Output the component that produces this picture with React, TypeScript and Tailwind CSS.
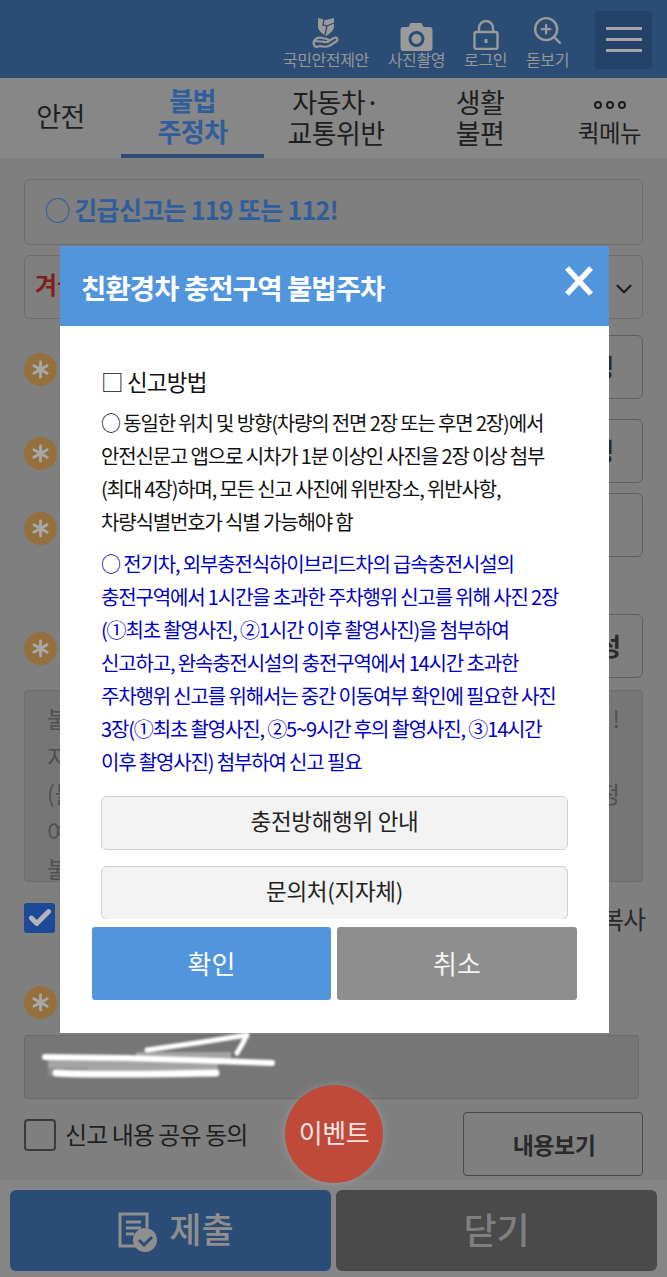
import { ZoomIn, Check, ChevronDown } from "lucide-react";

const Star = ({ className = "" }: { className?: string }) => (
  <div className={`flex h-[33px] w-[33px] shrink-0 items-center justify-center rounded-full bg-[#94703f] ${className}`}>
    <svg width="19" height="19" viewBox="0 0 20 20" stroke="#a8a8a8" strokeWidth="3" strokeLinecap="round">
      <path d="M10 2v16M3 6l14 8M17 6L3 14" />
    </svg>
  </div>
);

const HeaderItem = ({ label, icon }: { label: string; icon: React.ReactNode }) => (
  <div className="flex flex-col items-center">
    <div className="flex h-[32px] items-end justify-center">{icon}</div>
    <span className="whitespace-nowrap text-[16px] leading-[20px] tracking-[-0.4px] text-[#979797]">{label}</span>
  </div>
);

const SideButton = ({ label, shift = "" }: { label?: string; shift?: string }) => (
  <div className={`flex h-[64px] w-[150px] items-center justify-center rounded-[6px] border border-[#5f5f5f] text-[25px] font-bold text-[#2a2a2a] ${shift}`}>
    {label}
  </div>
);

const Row = ({ label, top, star, shift }: { label?: string; top: string; star: string; shift?: string }) => (
  <div className={`flex items-center justify-between ${top}`}>
    <Star className={star} />
    <SideButton label={label} shift={shift} />
  </div>
);

export default function App() {
  return (
    <div className="relative h-[1277px] w-[667px] overflow-hidden bg-[#7f7f7f] font-['Noto_Sans_CJK_KR',sans-serif] text-[#222]">
      {/* header */}
      <header className="flex h-[78px] items-start justify-end bg-[#2b4c75] pr-[15px]">
        <div className="mt-[17px] flex gap-[19px]">
          <HeaderItem
            label="국민안전제안"
            icon={
              <svg width="28" height="31" viewBox="0 0 28 31" fill="none" className="mb-[1px]">
                <path d="M6 1l8 2 8-2v8c0 4-3 7-8 10-5-3-8-6-8-10z" fill="#9a9a9a" />
                <path d="M12 2l-1 6 4 1-2 9M15 9l7-3" stroke="#2b4c75" strokeWidth="1.300" />
                <path d="M2 24c2-3 5-4 8-3l5 1c2 0 2 3 0 3h-4m4 0l7-4c3-1 4 1 3 3l-8 5c-3 1-6 1-9 0l-4 1c-2-1-3-4-2-6z" stroke="#9a9a9a" strokeWidth="2.200" strokeLinejoin="round" />
              </svg>
            }
          />
          <HeaderItem
            label="사진촬영"
            icon={
              <svg width="33" height="29" viewBox="0 0 32 29" className="mb-[-2px]">
                <path fillRule="evenodd" fill="#9a9a9a" d="M10 1h11l2 4h6c2 0 3 1 3 3v18c0 2-1 3-3 3H3c-2 0-3-1-3-3V8c0-2 1-3 3-3h5zM16 9a8 8 0 100 16 8 8 0 000-16zm0 3a5 5 0 110 10 5 5 0 010-10z" />
              </svg>
            }
          />
          <HeaderItem
            label="로그인"
            icon={
              <svg width="26" height="30" viewBox="0 0 26 30" fill="none" stroke="#9a9a9a" strokeWidth="2.400" className="mb-[-1px]">
                <rect x="1.500" y="12" width="23" height="17" rx="2" />
                <path d="M6 12V8a7 7 0 0114 0v4" />
                <path d="M13 19v4" strokeWidth="3" />
              </svg>
            }
          />
          <HeaderItem label="돋보기" icon={<ZoomIn size={33} strokeWidth={1.7} color="#9a9a9a" className="mb-[2px]" />} />
        </div>
        <div className="ml-[26px] mt-[11px] flex h-[58px] w-[57px] flex-col items-center justify-start gap-[8px] rounded-[3px] bg-[#244269] pt-[16px]">
          <span className="h-[3px] w-[36px] bg-[#a5a5a5]" />
          <span className="h-[3px] w-[36px] bg-[#a5a5a5]" />
          <span className="h-[3px] w-[36px] bg-[#a5a5a5]" />
        </div>
      </header>

      {/* tabs */}
      <nav className="flex h-[80px] bg-[#878787] text-center text-[27px] leading-[31px] tracking-[-0.6px] text-[#1e1e1e]">
        <div className="flex w-[121px] items-center justify-center pb-[5px]">안전</div>
        <div className="flex w-[143px] flex-col items-center justify-center border-b-[4px] border-[#2b4c75] pb-[3px] text-[26px] font-bold text-[#2f5e9c]">
          <span>불법</span>
          <span>주정차</span>
        </div>
        <div className="flex w-[144px] flex-col items-center justify-center pb-[3px]">
          <span>자동차·</span>
          <span>교통위반</span>
        </div>
        <div className="flex w-[144px] flex-col items-center justify-center pb-[3px]">
          <span>생활</span>
          <span>불편</span>
        </div>
        <div className="flex flex-1 flex-col items-center justify-end pb-[12px] text-[23.500px] leading-[28px]">
          <span className="mb-[9px] flex gap-[4px]">
            <i className="h-[8px] w-[8px] rounded-full border-[2px] border-[#1e1e1e]" />
            <i className="h-[8px] w-[8px] rounded-full border-[2px] border-[#1e1e1e]" />
            <i className="h-[8px] w-[8px] rounded-full border-[2px] border-[#1e1e1e]" />
          </span>
          <span>퀵메뉴</span>
        </div>
      </nav>

      {/* page form */}
      <main className="px-[24px] pt-[21px]">
        <div className="flex h-[66px] items-center rounded-[6px] border border-[#6d6d6d] pb-[4px] pl-[20px] text-[25px] font-bold tracking-[-0.7px] text-[#2f5e9c]">
          ◯ 긴급신고는 119 또는 112!
        </div>
        <div className="mt-[10px] flex h-[64px] items-center justify-between rounded-[6px] border border-[#6d6d6d] pl-[10px] pr-[5px] text-[24px] font-bold text-[#7f1f1f]">
          <span className="mb-[6px]">겨울철</span>
          <ChevronDown size={26} strokeWidth={2} color="#1e1e1e" className="mt-[4px]" />
        </div>
        <Row star="mt-[4px]" top="mt-[16px]" label="사진촬영" />
        <Row star="mt-[4px]" top="mt-[20px]" label="영상촬영" />
        <Row star="mt-[6px]" top="mt-[10px]" />
        <Row star="mt-[4px]" top="mt-[57px]" label="내용작성" shift="pl-[14px]" />
        <div className="mt-[12px] h-[192px] overflow-hidden rounded-[4px] border border-[#6d6d6d] bg-[#767676] px-[22px] pt-[9px] text-[23px] leading-[37.500px] text-[#505050]">
          <div className="flex justify-between"><span>불법</span><span>!</span></div>
          <div>지</div>
          <div className="flex justify-between"><span>(불</span><span>정</span></div>
          <div>여</div>
          <div>불</div>
        </div>
        <div className="mt-[21px] flex h-[30px] items-center justify-between">
          <div className="flex h-[30px] w-[31px] items-center justify-center rounded-[3px] bg-[#1c4a96]">
            <Check size={26} strokeWidth={4.5} color="#b5b5b5" />
          </div>
          <span className="mr-[-2px] text-[25px] leading-[30px] tracking-[-1px] text-[#2a2a2a]">복사</span>
        </div>
        <Star className="mt-[53px]" />
        <div className="mt-[16px] h-[64px] w-[615px] rounded-[3px] border border-[#6a6a6a] bg-[#767676]" />
        <div className="mt-[13px] flex h-[64px] items-start justify-between">
          <div className="mt-[7px] flex items-start gap-[9px]">
            <span className="h-[32px] w-[32px] rounded-[4px] border-[2px] border-[#3a3a3a]" />
            <span className="text-[24px] leading-[30px] tracking-[-0.95px] text-[#1e1e1e]">신고 내용 공유 동의</span>
          </div>
          <div className="flex h-[64px] w-[180px] items-center justify-center rounded-[4px] border border-[#4a4a4a] pl-[2px] text-[23px] font-bold tracking-[-0.5px] text-[#2a2a2a]">
            내용보기
          </div>
        </div>
      </main>

      {/* bottom buttons */}
      <footer className="absolute inset-x-0 bottom-0 flex h-[97px] gap-[5px] bg-[#858585] px-[10px] pb-[6px] pt-[10px]">
        <div className="flex w-[321px] items-center justify-center gap-[12px] rounded-[6px] bg-[#2a4c76] pb-[5px] pl-[10px] text-[35px] font-medium text-[#8f8f8f]">
          <svg width="40" height="40" viewBox="0 0 40 40" fill="none" className="mt-[8px]">
            <path d="M20 34H3V2h27v14" stroke="#8f8f8f" strokeWidth="3" />
            <path d="M9 10h15M9 16h15M9 22h8" stroke="#8f8f8f" strokeWidth="2.800" />
            <circle cx="28" cy="28" r="12" fill="#8f8f8f" />
            <path d="M22 28l5 5 8-8" stroke="#2a4c76" strokeWidth="3" />
          </svg>
          <span>제출</span>
        </div>
        <div className="flex w-[321px] items-center justify-center rounded-[6px] bg-[#4a4a4a] pb-[5px] text-[36px] font-medium text-[#7f7f7f]">닫기</div>
      </footer>

      {/* masked scribble lying over the input */}
      <svg className="absolute left-[40px] top-[1030px] blur-[1px]" width="240" height="55" viewBox="0 0 240 55" fill="none">
        <g fill="#a4a4a4">
          <rect x="8" y="29" width="170" height="11" />
          <rect x="96" y="22" width="95" height="8" />
          <rect x="8" y="38" width="40" height="8" fill="#8c8c8c" />
        </g>
        <g stroke="#ffffff" strokeLinecap="round" strokeLinejoin="round">
          <path d="M5 27l80 1 65 2 82 3" strokeWidth="6" />
          <path d="M107 20c30-4 70-10 100-15 -3 6-6 12-10 18" strokeWidth="5" />
          <path d="M16 43c30 2 100 1 160 0" strokeWidth="7" />
        </g>
      </svg>

      {/* event bubble */}
      <div className="absolute left-[285px] top-[1085px] flex h-[98px] w-[98px] items-center justify-center rounded-full bg-[#bf4a3a] pb-[6px] text-[26px] tracking-[-0.5px] text-[#f0e4e2] shadow-[0_0_8px_rgba(255,255,255,0.2)]">
        이벤트
      </div>

      {/* modal */}
      <div className="absolute left-[60px] top-[246px] flex h-[787px] w-[549px] flex-col bg-white">
        <div className="flex h-[80px] shrink-0 items-start justify-between bg-[#5195dd] pl-[21px] pr-[15px] text-white">
          <span className="mt-[21px] text-[27.500px] font-bold leading-[40px] tracking-[-0.9px]">친환경차 충전구역 불법주차</span>
          <svg width="30" height="30" viewBox="0 0 30 30" className="mt-[20px]" stroke="#ffffff" strokeWidth="5.500">
            <path d="M3 2l24 26M27 2L3 28" />
          </svg>
        </div>
        <div className="h-[593px] shrink-0 overflow-hidden px-[41px] pt-[39px]">
          <div className="text-[22.500px] leading-[33px] tracking-[-0.8px] text-[#111]">□ 신고방법</div>
          <div className="mt-[8px] whitespace-nowrap text-[20px] leading-[33px] tracking-[-1.150px] text-[#111]">
            <div>○ 동일한 위치 및 방향(차량의 전면 2장 또는 후면 2장)에서</div>
            <div>안전신문고 앱으로 시차가 1분 이상인 사진을 2장 이상 첨부</div>
            <div>(최대 4장)하며, 모든 신고 사진에 위반장소, 위반사항,</div>
            <div>차량식별번호가 식별 가능해야 함</div>
          </div>
          <div className="mt-[9px] whitespace-nowrap text-[20px] leading-[33px] tracking-[-1.150px] text-[#0000c4]">
            <div>○ 전기차, 외부충전식하이브리드차의 급속충전시설의</div>
            <div>충전구역에서 1시간을 초과한 주차행위 신고를 위해 사진 2장</div>
            <div>(①최초 촬영사진, ②1시간 이후 촬영사진)을 첨부하여</div>
            <div>신고하고, 완속충전시설의 충전구역에서 14시간 초과한</div>
            <div>주차행위 신고를 위해서는 중간 이동여부 확인에 필요한 사진</div>
            <div>3장(①최초 촬영사진, ②5~9시간 후의 촬영사진, ③14시간</div>
            <div>이후 촬영사진) 첨부하여 신고 필요</div>
          </div>
          <div className="mt-[18px] flex h-[54px] items-center justify-center rounded-[6px] border border-[#cfcfcf] bg-[#f3f3f3] pb-[4px] text-[22.500px] tracking-[-0.3px] text-[#222]">충전방해행위 안내</div>
          <div className="mt-[16px] flex h-[54px] items-center justify-center rounded-[6px] border border-[#cfcfcf] bg-[#f3f3f3] pb-[4px] text-[22.500px] tracking-[-0.3px] text-[#222]">문의처(지자체)</div>
        </div>
        <div className="mt-[8px] flex gap-[6px] px-[32px]">
          <div className="flex h-[73px] w-[239px] items-center justify-center rounded-[3px] bg-[#5195dd] pb-[3px] text-[26px] text-white">확인</div>
          <div className="flex h-[73px] w-[240px] items-center justify-center rounded-[3px] bg-[#8e8e8e] pb-[3px] text-[26px] text-[#f2f2f2]">취소</div>
        </div>
      </div>
    </div>
  );
}
